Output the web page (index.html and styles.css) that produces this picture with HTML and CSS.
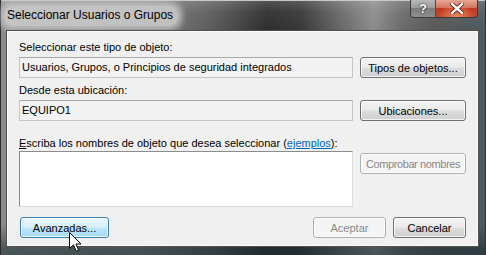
FILE: index.html
```html
<!DOCTYPE html>
<html lang="es">
<head>
  <meta charset="UTF-8">
  <title>Seleccionar Usuarios o Grupos</title>
  <link rel="stylesheet" href="styles.css">
</head>
<body>

  <div class="window">
    <!-- barra de título -->
    <div class="titlebar">
      <span class="title">Seleccionar Usuarios o Grupos</span>
      <div class="caption-buttons">
        <span class="cap-btn help">?</span>
        <span class="cap-btn close">
          <svg width="14" height="11" viewBox="0 0 14 11">
            <path d="M2 1 L12 10 M12 1 L2 10" stroke="#6d1a10" stroke-width="4.2" stroke-linecap="square"/>
            <path d="M2 1 L12 10 M12 1 L2 10" stroke="#fff" stroke-width="2.4" stroke-linecap="square"/>
          </svg>
        </span>
      </div>
    </div>

    <div class="client">
      <div class="label label-first">Seleccionar este tipo de objeto:</div>
      <div class="row">
        <div class="field">Usuarios, Grupos, o Principios de seguridad integrados</div>
        <button class="btn">Tipos de objetos...</button>
      </div>

      <div class="label label-second">Desde esta ubicación:</div>
      <div class="row">
        <div class="field">EQUIPO1</div>
        <button class="btn">Ubicaciones...</button>
      </div>

      <div class="label label-third"><u>E</u>scriba los nombres de objeto que desea seleccionar (<a href="#" class="link">ejemplos</a>):</div>
      <div class="row row-names">
        <div class="names-box"></div>
        <button class="btn btn-disabled btn-check">Comprobar nombres</button>
      </div>

      <div class="row row-bottom">
        <button class="btn btn-hover btn-advanced">Avanzadas...</button>
        <div class="spacer"></div>
        <button class="btn btn-disabled btn-ok">Aceptar</button>
        <button class="btn btn-cancel">Cancelar</button>
      </div>
    </div>

    <!-- puntero del ratón -->
    <svg class="cursor" width="13" height="21" viewBox="0 0 13 21">
      <path d="M0.5 0.5 L0.5 16.5 L4.5 12.8 L7.2 19.2 L9.6 18.2 L7 12 L12 12 Z" fill="#fff" stroke="#000" stroke-width="1"/>
    </svg>
  </div>

</body>
</html>
```

FILE: styles.css
```css
body {
  margin: 0;
  background: #3a4448;
  font-family: "Liberation Sans", Arial, sans-serif;
}
.window {
  position: relative;
  width: 486px;
  height: 255px;
  display: flex;
  flex-direction: column;
  box-sizing: border-box;
  border-left: 1px solid #2b2b2b;
  border-right: 1px solid #2b3336;
  background:
    linear-gradient(to bottom, rgba(255,255,255,0.18) 0, rgba(255,255,255,0.05) 12px, rgba(0,0,0,0) 30px, rgba(0,0,0,0) 225px, rgba(20,40,45,0.55) 250px),
    linear-gradient(to right, #8a8a8a 0%, #7e7e7e 30%, #5a5a5a 44%, #2e2e2e 55%, #383838 62%, #686868 70%, #8c8c8c 77%, #6a6a6a 83%, #585858 90%, #4e5a5f 100%);
}
.titlebar {
  height: 31px;
  display: flex;
  justify-content: space-between;
  align-items: flex-start;
  border-top: 1px solid #c9c9c9;
  box-sizing: border-box;
}
.title {
  margin-top: 5px;
  margin-left: 3px;
  padding: 2px 5px 3px 3px;
  font-size: 12px;
  line-height: 15px;
  color: #000;
  background: rgba(205,205,205,0.85);
  border-radius: 8px;
  box-shadow: 0 0 6px 4px rgba(205,205,205,0.8);
}
.caption-buttons {
  display: flex;
  margin-right: 7px;
  margin-top: -1px;
  border: 1px solid #3a3a3a;
  border-top: none;
  border-radius: 0 0 4px 4px;
  overflow: hidden;
}
.cap-btn {
  height: 17px;
  display: flex;
  align-items: center;
  justify-content: center;
}
.help {
  width: 24px;
  border-right: 1px solid #4a4a4a;
  background: linear-gradient(to bottom, #b9b9b9 0%, #9c9c9c 45%, #7c7c7c 50%, #8e8e8e 100%);
  color: #fff;
  font-weight: bold;
  font-size: 13px;
  text-shadow: 0 0 2px #222, 0 0 1px #222;
}
.close {
  width: 41px;
  background:
    radial-gradient(ellipse at 50% 100%, rgba(255,170,120,0.7) 0, rgba(255,170,120,0) 60%),
    linear-gradient(to bottom, #e8a898 0%, #d4735e 45%, #bf3a22 50%, #c4482f 100%);
}
.client {
  flex: 1;
  margin: 0 7px 9px 6px;
  padding: 0 11px;
  background: #f0f0f0;
  border: 1px solid #fbfbfb;
  box-shadow: 0 0 0 1px #4f4f4f;
  font-size: 11px;
  color: #000;
}
.label {
  line-height: 15px;
  white-space: nowrap;
}
.label-first {
  margin-top: 8px;
}
.label-second {
  margin-top: 5px;
}
.label-third {
  margin-top: 15px;
}
.link {
  color: #0066cc;
}
.row {
  display: flex;
  align-items: flex-end;
  gap: 7px;
  margin-top: 2px;
}
.field {
  flex: 1;
  height: 21px;
  box-sizing: border-box;
  padding: 0 2px;
  line-height: 19px;
  background: #f2f2f2;
  border: 1px solid #c6c6c6;
  border-top-color: #a9a9a9;
  white-space: nowrap;
}
.btn {
  width: 106px;
  height: 21px;
  padding: 0;
  box-sizing: border-box;
  font-family: inherit;
  font-size: 11px;
  color: #000;
  border: 1px solid #707070;
  border-radius: 3px;
  background: linear-gradient(to bottom, #f3f3f3 0%, #ebebeb 48%, #dddddd 52%, #cfcfcf 100%);
  box-shadow: inset 0 0 0 1px rgba(255,255,255,0.75);
  white-space: nowrap;
}
.btn-hover {
  border-color: #3c7fb1;
  background: linear-gradient(to bottom, #eaf6fd 0%, #d9f0fc 48%, #bee6fd 52%, #a7d9f5 100%);
}
.btn-disabled {
  color: #8a8a8a;
  border-color: #adb2b5;
  background: #f4f4f4;
}
.row-names {
  align-items: flex-start;
  margin-top: 0;
}
.names-box {
  flex: 1;
  height: 56px;
  box-sizing: border-box;
  background: #fff;
  border: 1px solid #dcdcdc;
  border-top-color: #8c8c8c;
  border-left-color: #8c8c8c;
}
.btn-check {
  margin-top: 2px;
  letter-spacing: -0.4px;
}
.row-bottom {
  margin-top: 10px;
  gap: 7px;
}
.btn-advanced {
  width: 89px;
  margin-left: 1px;
}
.spacer {
  flex: 1;
}
.btn-ok,
.btn-cancel {
  width: 73px;
}
.cursor {
  position: absolute;
  left: 68px;
  top: 232px;
}
```
